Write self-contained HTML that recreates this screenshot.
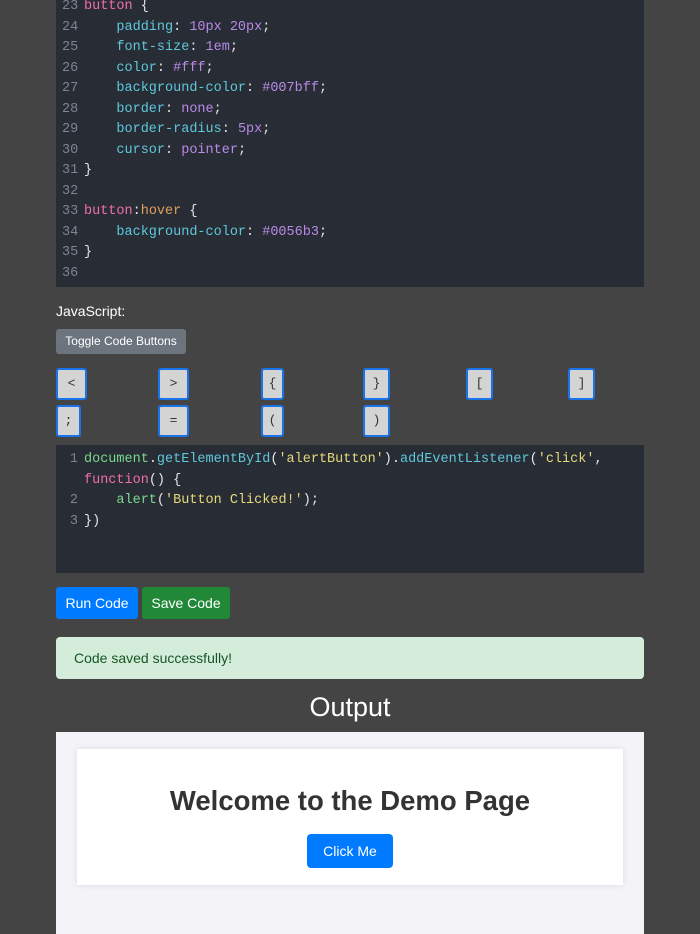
<!DOCTYPE html>
<html><head><style>
body{margin:0;width:700px;height:934px;background:#444;overflow:hidden;font-family:"Liberation Sans",sans-serif;position:relative}
.a{position:absolute}
.code{background:#282c34;font-family:"Liberation Mono",monospace;font-size:13.5px;line-height:20.5px;color:#e6e6e6}
.ln{position:absolute;left:6px;color:#7d8590;width:16px;text-align:right}
.tx{position:absolute;left:28px;white-space:pre}
.k{color:#f06fa8}.p{color:#5fc8dc}.v{color:#b98ae8}.o{color:#e0a060}.s{color:#e6d97a}.g{color:#7bd88f}
.kb{position:absolute;background:#d4d4d4;border:2px solid #1a73e8;border-radius:3px;height:28px;font-family:"Liberation Mono",monospace;font-size:13px;color:#333;text-align:center;line-height:28px}
</style></head><body>
<div class="a code" style="left:56px;top:0;width:588px;height:287px"><div class="a" style="left:0;top:2px;width:588px">
<div class="ln" style="top:-5px">23</div><div class="tx" style="top:-5px"><span class="k">button</span> {</div>
<div class="ln" style="top:15.5px">24</div><div class="tx" style="top:15.5px">    <span class="p">padding</span>: <span class="v">10px 20px</span>;</div>
<div class="ln" style="top:36px">25</div><div class="tx" style="top:36px">    <span class="p">font-size</span>: <span class="v">1em</span>;</div>
<div class="ln" style="top:56.5px">26</div><div class="tx" style="top:56.5px">    <span class="p">color</span>: <span class="v">#fff</span>;</div>
<div class="ln" style="top:77px">27</div><div class="tx" style="top:77px">    <span class="p">background-color</span>: <span class="v">#007bff</span>;</div>
<div class="ln" style="top:97.5px">28</div><div class="tx" style="top:97.5px">    <span class="p">border</span>: <span class="v">none</span>;</div>
<div class="ln" style="top:118px">29</div><div class="tx" style="top:118px">    <span class="p">border-radius</span>: <span class="v">5px</span>;</div>
<div class="ln" style="top:138.5px">30</div><div class="tx" style="top:138.5px">    <span class="p">cursor</span>: <span class="v">pointer</span>;</div>
<div class="ln" style="top:159px">31</div><div class="tx" style="top:159px">}</div>
<div class="ln" style="top:179.5px">32</div>
<div class="ln" style="top:200px">33</div><div class="tx" style="top:200px"><span class="k">button</span>:<span class="o">hover</span> {</div>
<div class="ln" style="top:220.5px">34</div><div class="tx" style="top:220.5px">    <span class="p">background-color</span>: <span class="v">#0056b3</span>;</div>
<div class="ln" style="top:241px">35</div><div class="tx" style="top:241px">}</div>
<div class="ln" style="top:261.5px">36</div>
</div></div>
<div class="a" style="left:56px;top:303px;color:#fff;font-size:14px">JavaScript:</div>
<div class="a" style="left:56px;top:329px;width:130px;height:25px;background:#6c757d;border-radius:3px;color:#fff;font-size:12px;line-height:25px;text-align:center">Toggle Code Buttons</div>
<div class="kb" style="left:56px;top:368px;width:27px">&lt;</div>
<div class="kb" style="left:158px;top:368px;width:27px">&gt;</div>
<div class="kb" style="left:261px;top:368px;width:19px">{</div>
<div class="kb" style="left:363px;top:368px;width:23px">}</div>
<div class="kb" style="left:466px;top:368px;width:23px">[</div>
<div class="kb" style="left:568px;top:368px;width:23px">]</div>
<div class="kb" style="left:56px;top:405px;width:21px">;</div>
<div class="kb" style="left:158px;top:405px;width:27px">=</div>
<div class="kb" style="left:261px;top:405px;width:19px">(</div>
<div class="kb" style="left:363px;top:405px;width:23px">)</div>
<div class="a code" style="left:56px;top:445px;width:588px;height:128px">
<div class="ln" style="top:5px">1</div><div class="tx" style="top:5px"><span class="g">document</span>.<span class="p">getElementById</span>(<span class="s">'alertButton'</span>).<span class="p">addEventListener</span>(<span class="s">'click'</span>,</div>
<div class="tx" style="top:25.5px"><span class="k">function</span>() {</div>
<div class="ln" style="top:46px">2</div><div class="tx" style="top:46px">    <span class="g">alert</span>(<span class="s">'Button Clicked!'</span>);</div>
<div class="ln" style="top:66.5px">3</div><div class="tx" style="top:66.5px">})</div>
</div>
<div class="a" style="left:56px;top:587px;width:82px;height:32px;background:#007bff;border-radius:3px;color:#fff;font-size:14px;line-height:32px;text-align:center">Run Code</div>
<div class="a" style="left:142px;top:587px;width:88px;height:32px;background:#218838;border-radius:3px;color:#fff;font-size:14px;line-height:32px;text-align:center">Save Code</div>
<div class="a" style="left:56px;top:637px;width:588px;height:42px;background:#d4edda;border-radius:4px;color:#155724;font-size:14px;line-height:42px;box-sizing:border-box;padding-left:18px">Code saved successfully!</div>
<div class="a" style="left:0;width:700px;top:692px;text-align:center;color:#fff;font-size:27px">Output</div>
<div class="a" style="left:56px;top:732px;width:588px;height:202px;background:#f4f4f8">
<div class="a" style="left:21px;top:17px;width:546px;height:136px;background:#fff;box-shadow:0 0 6px rgba(0,0,0,.1)">
<div class="a" style="left:0;width:546px;top:36px;text-align:center;font-weight:bold;font-size:27.5px;color:#333">Welcome to the Demo Page</div>
<div class="a" style="left:230px;top:85px;width:86px;height:34px;background:#007bff;border-radius:4px;color:#fff;font-size:14px;line-height:34px;text-align:center">Click Me</div>
</div></div>
</body></html>
